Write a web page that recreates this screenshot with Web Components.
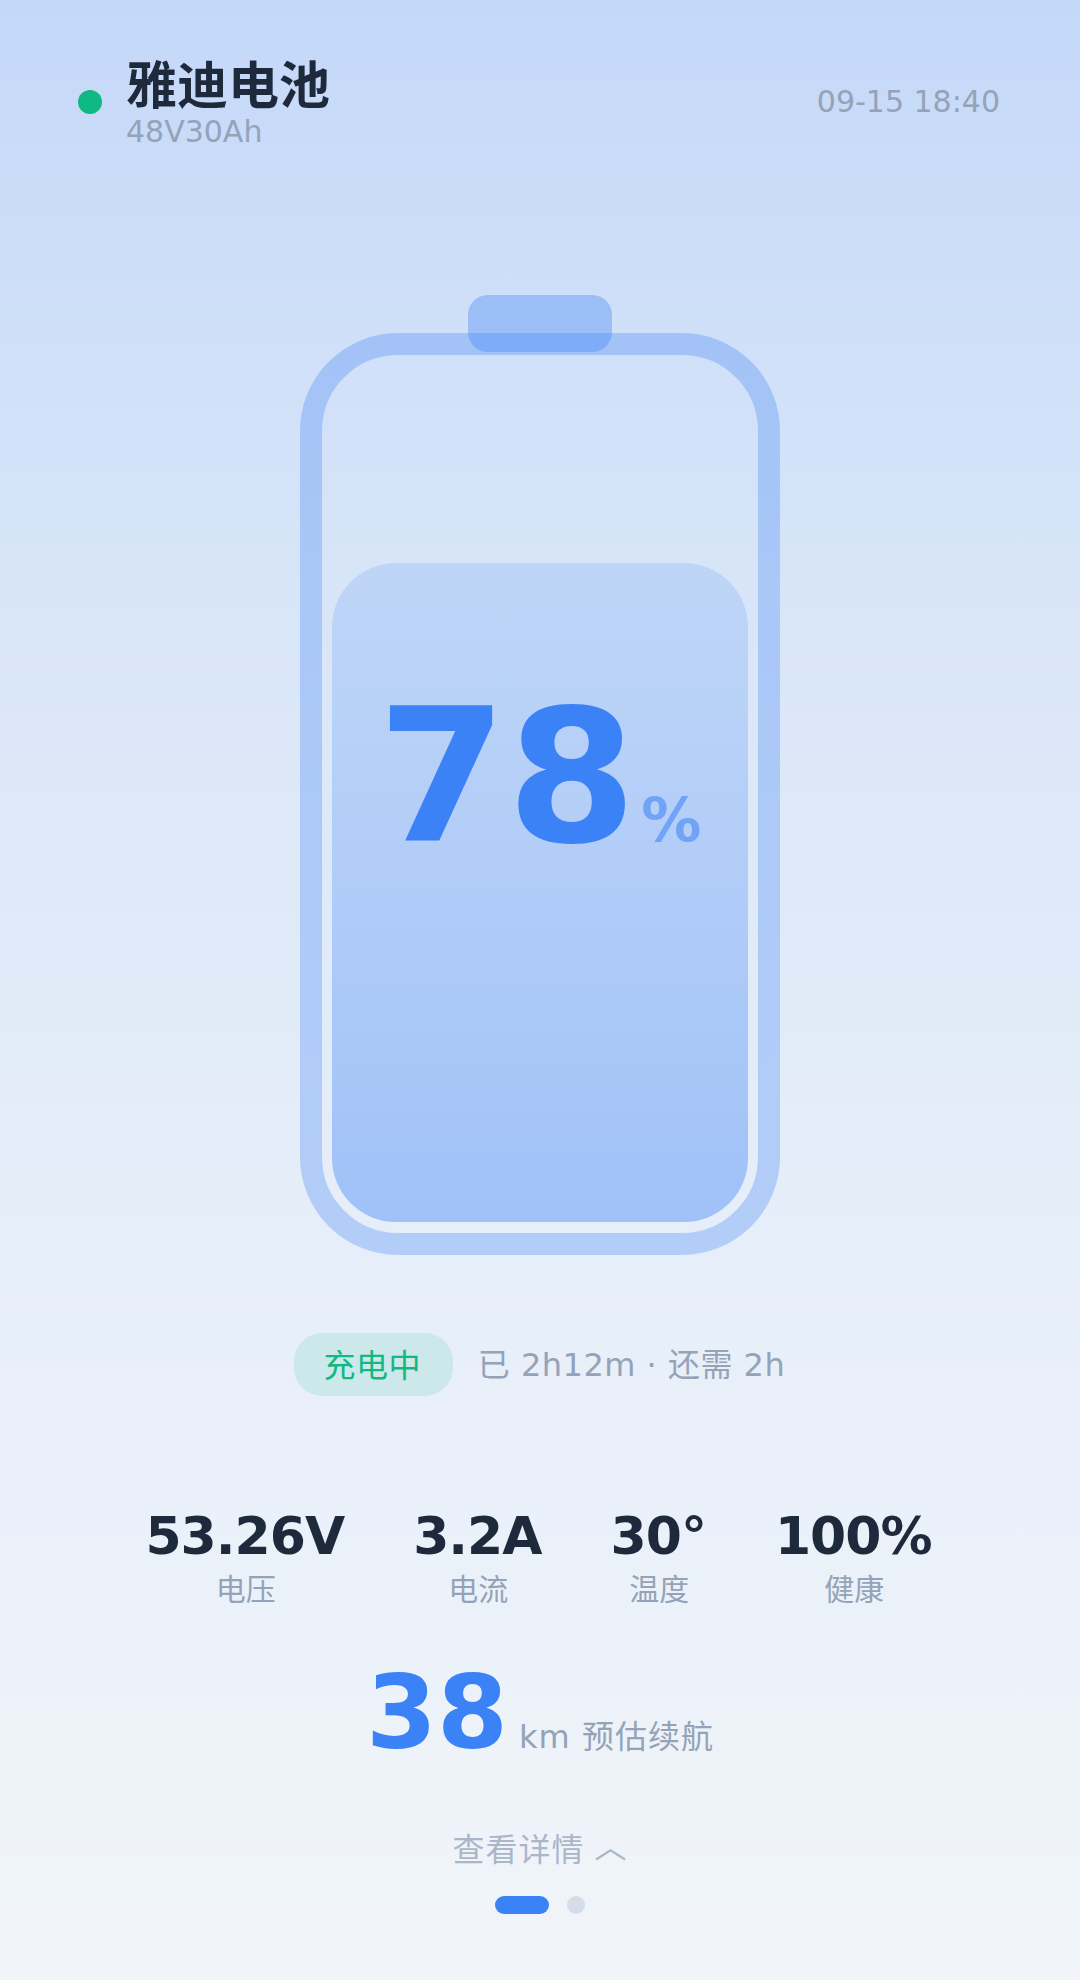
<!DOCTYPE html>
<html lang="zh"><head><meta charset="utf-8"><title>雅迪电池</title>
<style>
html,body{margin:0;padding:0}
body{font-family:"DejaVu Sans","Noto Sans CJK SC",sans-serif;}
</style></head><body>
<battery-page>
  <status-header title-text="雅迪电池" sub="48V30Ah" time="09-15 18:40"></status-header>
  <battery-gauge value="78"></battery-gauge>
  <charge-status state="充电中" detail="已 2h12m · 还需 2h"></charge-status>
  <stat-row>
    <stat-item value="53.26V" label="电压"></stat-item>
    <stat-item value="3.2A" label="电流"></stat-item>
    <stat-item value="30°" label="温度"></stat-item>
    <stat-item value="100%" label="健康"></stat-item>
  </stat-row>
  <range-line value="38" label="km 预估续航"></range-line>
  <detail-footer></detail-footer>
</battery-page>
<script>
function def(name,html,attrs){
  customElements.define(name,class extends HTMLElement{
    connectedCallback(){
      if(this.shadowRoot)return;
      const r=this.attachShadow({mode:'open'});
      r.innerHTML=html.replace(/\{\{(\w[\w-]*)\}\}/g,(m,k)=>this.getAttribute(k)||'');
    }
  });
}
def('battery-page',`<style>
:host{display:flex;flex-direction:column;box-sizing:border-box;width:1080px;height:1980px;overflow:hidden;
background:linear-gradient(180deg,#c4d8f8 0%,#d9e6f8 31%,#e6eef9 62%,#f1f5f9 100%);padding-top:56px}
</style><slot></slot>`);
def('status-header',`<style>
:host{display:flex;align-items:center;justify-content:space-between;padding:0 80px 0 78px;height:92px}
.l{display:flex;align-items:center;gap:24px}
.dot{width:24px;height:24px;border-radius:50%;background:#10b981}
.t{font-size:51px;font-weight:700;color:#1e293b;line-height:56px;padding-top:3px}
.s{font-size:30px;color:#94a3b8;line-height:34px}
.time{font-size:30px;color:#94a3b8;margin-top:-2px}
</style><div class="l"><div class="dot"></div><div><div class="t">{{title-text}}</div><div class="s">{{sub}}</div></div></div><div class="time">{{time}}</div>`);
def('battery-gauge',`<style>
:host{display:flex;flex-direction:column;align-items:center;margin-top:147px}
.cap{width:144px;height:57px;border-radius:20px;background:rgba(59,130,246,.35);margin-bottom:-19px;position:relative}
.body{box-sizing:border-box;width:480px;height:922px;border:22px solid rgba(59,130,246,.3);border-radius:98px;padding:0 10px 11px;display:flex;flex-direction:column;justify-content:flex-end;background-clip:padding-box}
.fill{height:659px;border-radius:64px;background:linear-gradient(to top,rgba(59,130,246,.41),rgba(59,130,246,.16));display:flex;justify-content:center;align-items:baseline;padding-top:128px;box-sizing:border-box}
.n{font-size:186px;font-weight:700;color:#3b82f6;line-height:172px;margin-left:4px}
.p{font-size:60px;font-weight:700;color:#3b82f6;opacity:.55;margin:0 5px}
</style><div class="cap"></div><div class="body"><div class="fill"><span class="n">{{value}}</span><span class="p">%</span></div></div>`);
def('charge-status',`<style>
:host{display:flex;align-items:center;justify-content:center;gap:25px;margin-top:78px;padding-right:1px}
.pill{box-sizing:border-box;width:159px;height:63px;border-radius:28px;background:rgba(16,185,129,.12);color:#10b981;font-size:32px;letter-spacing:.5px;display:flex;align-items:center;justify-content:center;padding:0 2px 4px 0}
.d{font-size:32px;color:#94a3b8;letter-spacing:.5px;padding-bottom:6px}
</style><div class="pill">{{state}}</div><div class="d">{{detail}}</div>`);
def('stat-row',`<style>
:host{display:flex;justify-content:center;gap:69px;margin-top:110px;padding-right:3px}
</style><slot></slot>`);
def('stat-item',`<style>
:host{display:flex;flex-direction:column;align-items:center}
.v{font-size:52px;font-weight:700;color:#1e293b;line-height:60px;letter-spacing:-1px}
.k{font-size:30px;color:#94a3b8;line-height:40px;margin-top:4px;padding-left:2px}
</style><div class="v">{{value}}</div><div class="k">{{label}}</div>`);
def('range-line',`<style>
:host{display:flex;justify-content:center;align-items:baseline;gap:11px;margin-top:44px}
.v{font-size:102px;font-weight:700;color:#3b82f6;line-height:118px}
.k{font-size:32px;color:#94a3b8;letter-spacing:1px}
</style><div class="v">{{value}}</div><div class="k">{{label}}</div>`);
def('detail-footer',`<style>
:host{display:flex;flex-direction:column;align-items:center;margin-top:53px}
.t{font-size:32px;color:#94a3b8;opacity:.75;line-height:44px;letter-spacing:1px}
.c{vertical-align:3px;margin-left:-1px}
.dots{display:flex;gap:18px;margin-top:24px}
.a{width:54px;height:18px;border-radius:9px;background:#3b82f6}
.b{width:18px;height:18px;border-radius:50%;background:#cbd5e1;opacity:.75}
</style><div class="t">查看详情 <span class="c">︿</span></div><div class="dots"><div class="a"></div><div class="b"></div></div>`);
</script>
</body></html>
